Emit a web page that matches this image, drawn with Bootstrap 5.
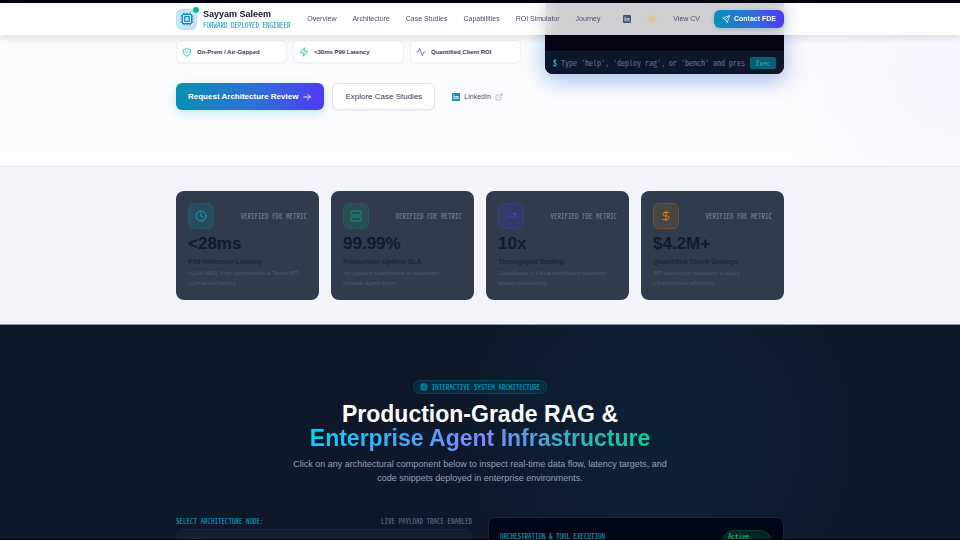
<!DOCTYPE html>
<html lang="en">
<head>
<meta charset="utf-8">
<meta name="viewport" content="width=device-width, initial-scale=1">
<title>Sayyam Saleem – Forward Deployed Engineer</title>
<link href="https://cdn.jsdelivr.net/npm/bootstrap@5.3.0/dist/css/bootstrap.min.css" rel="stylesheet">
<style>
:root { --cy: #0891b2; --cta: linear-gradient(90deg, #0891b2, #2f6fd8 55%, #4f39f6); }
body { font-family: "Liberation Sans", Arial, sans-serif; font-size: 7px; line-height: 10px; color: #0f172b; background: #f8fafc; }
.mono { font-family: "Noto Sans Mono CJK SC", "Noto Sans Mono CJK JP", "Liberation Mono", monospace; }
.frame { border-top: 3px solid #04040f; border-bottom: 1px solid #04040f; }
.wrap { width: 100%; max-width: 632px; padding: 0 12px; margin: 0 auto; }
svg { display: block; flex: none; fill: none; stroke: currentColor; stroke-width: 2; stroke-linecap: round; stroke-linejoin: round; }
.i8 { width: 8px; height: 8px; } .i10 { width: 10px; height: 10px; } .i12 { width: 12px; height: 12px; } .i14 { width: 14px; height: 14px; }
a { text-decoration: none; }
.topbar { background: rgba(255,255,255,.81); backdrop-filter: blur(8px); box-shadow: 0 2px 8px rgba(15,23,43,.14); z-index: 5; }
.topbar .wrap { height: 32px; }
.ident { gap: 6px; }
.logo { width: 21px; height: 21px; border-radius: 6px; background: linear-gradient(90deg, #c3e8f3, #d3dcfa); border: 1px solid #b5e2ef; color: var(--cy); }
.dot { width: 6px; height: 6px; background: #00bc7d; top: -3px; right: -3px; }
.brand { font-size: 9px; line-height: 12px; font-weight: 700; }
.role { font-size: 7px; line-height: 10px; color: #0e97bd; }
.links { gap: 16px; }
.links a, .cv { color: #45556c; }
.tools { gap: 14px; margin-left: 6px; }
.contact { background: var(--cta); color: #fff; border-radius: 6px; height: 18px; padding: 0 8px; gap: 4px; box-shadow: 0 1px 4px rgba(8,145,178,.3); }
.plain { border: 0; padding: 0 2px; background: none; color: #f9bd14; }
.hero { height: 164px; background: radial-gradient(circle at 950px 70px, #f6f5fe 0, #f8f9fe 90px, transparent 180px), linear-gradient(#f9fafc, #fcfdfe); border-bottom: 1px solid #e2e8f0; }
.intro { flex: 0 1 345px; padding-top: 37px; }
.feats { display: grid; grid-template-columns: repeat(3, minmax(0, 1fr)); gap: 6px; }
.feat { background: #fff; border: 1px solid #edf2f6; border-radius: 5px; height: 23px; padding: 0 5px; gap: 5px; font-size: 6px; font-weight: 700; color: #314158; box-shadow: 0 1px 1px rgba(15,23,43,.03); white-space: nowrap; }
.acts { margin-top: 20px; gap: 8px; }
.cta { height: 27px; padding: 0 12px; border-radius: 6px; font-size: 8px; gap: 4px; white-space: nowrap; }
.cta-main { background: var(--cta); color: #fff; font-weight: 700; box-shadow: 0 3px 8px rgba(6,182,212,.25); }
.cta-alt { background: #fff; color: #314158; border: 1px solid #dfe5ee; box-shadow: 0 1px 2px rgba(15,23,43,.06); }
.in-link { color: #45556c; margin-left: 9px; gap: 4px; }
.term { flex: 0 0 239px; height: 71px; background: #030511; border-radius: 0 0 8px 8px; box-shadow: -3px 6px 18px rgba(8,145,178,.24), 4px 8px 22px rgba(79,57,246,.2); }
.prompt { background: #0d162a; border-top: 1px solid #141d31; height: 23px; padding: 0 8px; gap: 4px; border-radius: 0 0 8px 8px; }
.prompt label { color: #00c6e8; font-size: 8px; font-weight: 700; }
.prompt input { border: 0; background: none; padding: 0; outline: 0; font-size: 8px; min-width: 0; }
.prompt input::placeholder { color: #62748e; opacity: 1; }
.exec { background: #066078; color: #4fa4b5; border: 0; border-radius: 2px; width: 26px; height: 12px; padding: 0; margin-left: 1px; font-size: 7px; line-height: 12px; }
.stats { background: #f1f5f9; padding: 24px 0; border-bottom: 1px solid #8b93a0; }
.four { display: grid; grid-template-columns: repeat(4, minmax(0, 1fr)); gap: 12px; }
.metric { background: #303b4d; border-radius: 8px; padding: 12px; height: 109px; }
.tile { width: 26px; height: 26px; border-radius: 6px; border: 1px solid; }
.t-c { color: #079fc4; background: #294c60; border-color: #1c5c70; }
.t-g { color: #06996f; background: #294d51; border-color: #1f5e58; }
.t-v { color: #4a3fd8; background: #343a66; border-color: #3b3c78; }
.t-o { color: #dd790a; background: #494543; border-color: #6b512f; }
.ver { font-size: 7px; color: #7c8798; }
.num { font-size: 17px; line-height: 20px; font-weight: 700; margin: 5px 0 3px; color: #111a2e; }
.cap { font-size: 7px; line-height: 10px; font-weight: 700; color: #1e293b; margin: 0; }
.desc { font-size: 6px; line-height: 10px; color: #4b586d; margin: 1px 0 0; }
.arch { background: radial-gradient(circle at 660px 110px, #0c2035 0, #0d1d31 110px, transparent 210px), #0f172a; padding-top: 55px; }
.pill { color: #00a6c8; background: #072b40; border: 1px solid #0a4156; border-radius: 7px; height: 14px; padding: 0 6px; gap: 4px; font-size: 7px; }
.title { font-size: 23px; line-height: 24px; font-weight: 700; color: #fff; margin: 8px 0 7px; }
.grad { background: linear-gradient(90deg, #00d3f2, #7c86ff 50%, #00d492); -webkit-background-clip: text; background-clip: text; color: transparent; }
.lede { font-size: 9px; line-height: 14px; color: #90a1b9; max-width: 384px; margin: 0 auto 32px; }
.two { display: grid; grid-template-columns: repeat(2, minmax(0, 1fr)); gap: 16px; }
.sel { font-size: 7px; line-height: 9px; color: #0ba6c8; }
.sel span + span { color: #62748e; }
.node { margin-top: 3px; height: 64px; border: 1px solid #1a2537; border-radius: 8px; background: #142032; padding: 8px; }
.node i { width: 22px; height: 22px; border-radius: 6px; background: #1e293b; }
.panel { height: 90px; background: #010617; border: 1px solid #1a2639; border-radius: 8px; padding: 12px 11px; }
.ptitle { color: #0ba6c8; font-size: 7px; line-height: 13px; }
.live { color: #00d492; background: #02251f; border: 1px solid #05402f; border-radius: 12px; width: 50px; height: 25px; padding: 0 5px; font-size: 7px; line-height: 11px; }
</style>
</head>
<body>
<div class="frame vh-100 overflow-hidden position-relative">
<header class="topbar position-absolute top-0 start-0 end-0">
  <div class="wrap d-flex align-items-center justify-content-between">
    <div class="ident d-flex align-items-center">
      <div class="logo d-flex align-items-center justify-content-center position-relative">
        <svg class="i14" viewBox="0 0 24 24"><rect x="4" y="4" width="16" height="16" rx="2"/><rect x="8" y="8" width="8" height="8" rx="1"/><path d="M12 20v2M12 2v2M17 20v2M17 2v2M2 12h2M2 17h2M2 7h2M20 12h2M20 17h2M20 7h2M7 20v2M7 2v2"/></svg>
        <span class="dot rounded-circle position-absolute"></span>
      </div>
      <div><div class="brand">Sayyam Saleem</div><div class="role mono">FORWARD DEPLOYED ENGINEER</div></div>
    </div>
    <nav class="links d-flex"><a href="#">Overview</a><a href="#arch">Architecture</a><a href="#">Case Studies</a><a href="#">Capabilities</a><a href="#">ROI Simulator</a><a href="#">Journey</a></nav>
    <div class="tools d-flex align-items-center">
      <a href="#" class="cv" aria-label="LinkedIn"><svg class="i8" viewBox="1 1 22 22"><path fill="currentColor" fill-rule="evenodd" stroke="none" d="M4 1h16a3 3 0 0 1 3 3v16a3 3 0 0 1-3 3H4a3 3 0 0 1-3-3V4a3 3 0 0 1 3-3zM5 9.500v9h3v-9zM6.500 4.800a1.800 1.800 0 1 0 0 3.600 1.800 1.800 0 0 0 0-3.600zM10.500 9.500v9h3v-5c0-2 2.500-2.200 2.500 0v5h3V13c0-4.500-4.200-4.500-5.500-2.200V9.500z"/></svg></a>
      <button class="plain" type="button" aria-label="Toggle theme"><svg class="i10" viewBox="0 0 24 24"><circle cx="12" cy="12" r="4"/><path d="M12 2v2M12 20v2M4.900 4.900l1.400 1.400M17.700 17.700l1.400 1.400M2 12h2M20 12h2M6.300 17.700l-1.400 1.400M19.100 4.900l-1.400 1.400"/></svg></button>
      <a href="#" class="cv">View CV</a>
      <a href="#" class="contact d-flex align-items-center fw-bold"><svg class="i8" viewBox="0 0 24 24"><path d="M22 2 2 9l8 5 5 8z"/><path d="M22 2 10 14"/></svg>Contact FDE</a>
    </div>
  </div>
</header>
<section class="hero">
  <div class="wrap d-flex justify-content-between">
    <div class="intro">
      <div class="feats">
        <div class="feat d-flex align-items-center"><svg class="i10" style="color:#16b3d3" viewBox="0 0 24 24"><path d="M20 13c0 5-3.500 7.500-8 9-4.500-1.500-8-4-8-9V6c3 0 5.500-1.500 8-4 2.500 2.500 5 4 8 4z"/><path d="m9 12 2 2 4-4"/></svg>On-Prem / Air-Gapped</div>
        <div class="feat d-flex align-items-center"><svg class="i10" style="color:#10c28a" viewBox="0 0 24 24"><path d="M4 14a1 1 0 0 1-.8-1.600l9.900-10.200a.5.5 0 0 1 .9.500l-2 6A1 1 0 0 0 13 10h7a1 1 0 0 1 .8 1.600l-9.900 10.200a.5.5 0 0 1-.9-.5l2-6a1 1 0 0 0-1-1.300z"/></svg>&lt;30ms P99 Latency</div>
        <div class="feat d-flex align-items-center"><svg class="i10" style="color:#665cf5" viewBox="0 0 24 24"><path d="M22 12h-3.500L15 21 9 3 5.500 12H2"/></svg>Quantified Client ROI</div>
      </div>
      <div class="acts d-flex align-items-center">
        <a href="#" class="cta cta-main d-flex align-items-center">Request Architecture Review<svg class="i10" viewBox="0 0 24 24"><path d="M4 12h16M13 5l7 7-7 7"/></svg></a>
        <a href="#" class="cta cta-alt d-flex align-items-center">Explore Case Studies</a>
        <a href="#" class="in-link d-flex align-items-center"><svg class="i8" style="color:#0891b2" viewBox="1 1 22 22"><path fill="currentColor" fill-rule="evenodd" stroke="none" d="M4 1h16a3 3 0 0 1 3 3v16a3 3 0 0 1-3 3H4a3 3 0 0 1-3-3V4a3 3 0 0 1 3-3zM5 9.500v9h3v-9zM6.500 4.800a1.800 1.800 0 1 0 0 3.600 1.800 1.800 0 0 0 0-3.600zM10.500 9.500v9h3v-5c0-2 2.500-2.200 2.500 0v5h3V13c0-4.500-4.200-4.500-5.500-2.200V9.500z"/></svg>LinkedIn<svg class="i8" style="color:#90a1b9" viewBox="0 0 24 24"><path d="M15 3h6v6M10 14 21 3M18 13v6a2 2 0 0 1-2 2H5a2 2 0 0 1-2-2V8a2 2 0 0 1 2-2h6"/></svg></a>
      </div>
    </div>
    <div class="term d-flex flex-column justify-content-end">
      <form class="prompt mono d-flex align-items-center"><label for="cmd">$</label><input class="mono flex-fill" id="cmd" type="text" placeholder="Type 'help', 'deploy rag', or 'bench' and press Enter"><button class="exec mono" type="button">Exec</button></form>
    </div>
  </div>
</section>
<section class="stats">
  <div class="wrap"><div class="four">
    <article class="metric"><div class="d-flex align-items-center justify-content-between"><div class="tile t-c d-flex align-items-center justify-content-center"><svg class="i12" viewBox="0 0 24 24"><circle cx="12" cy="12" r="10"/><path d="M12 6v6l4 2"/></svg></div><span class="ver mono">VERIFIED FDE METRIC</span></div><p class="num">&lt;28ms</p><p class="cap">P99 Inference Latency</p><p class="desc">vLLM AWQ 4-bit optimization &amp; TensorRT-LLM kernel tuning</p></article>
    <article class="metric"><div class="d-flex align-items-center justify-content-between"><div class="tile t-g d-flex align-items-center justify-content-center"><svg class="i12" viewBox="0 0 24 24"><rect x="2" y="2" width="20" height="8" rx="2"/><rect x="2" y="14" width="20" height="8" rx="2"/></svg></div><span class="ver mono">VERIFIED FDE METRIC</span></div><p class="num">99.99%</p><p class="cap">Production Uptime SLA</p><p class="desc">Air-gapped Kubernetes &amp; redundant<br>fallback agent loops</p></article>
    <article class="metric"><div class="d-flex align-items-center justify-content-between"><div class="tile t-v d-flex align-items-center justify-content-center"><svg class="i12" viewBox="0 0 24 24"><path d="m2 17 6.500-6.500 5 5L22 7M16 7h6v6"/></svg></div><span class="ver mono">VERIFIED FDE METRIC</span></div><p class="num">10x</p><p class="cap">Throughput Scaling</p><p class="desc">ClickHouse + Kafka distributed telemetry stream processing</p></article>
    <article class="metric"><div class="d-flex align-items-center justify-content-between"><div class="tile t-o d-flex align-items-center justify-content-center"><svg class="i12" viewBox="0 0 24 24"><path d="M12 2v20M17 5H9.500a3.500 3.500 0 0 0 0 7h5a3.500 3.500 0 0 1 0 7H6"/></svg></div><span class="ver mono">VERIFIED FDE METRIC</span></div><p class="num">$4.2M+</p><p class="cap">Quantified Client Savings</p><p class="desc">API token cost reduction &amp; cloud infrastructure efficiency.</p></article>
  </div></div>
</section>
<section class="arch" id="arch">
  <div class="wrap">
    <div class="text-center">
      <div class="pill mono d-inline-flex align-items-center"><svg class="i8" viewBox="0 0 24 24"><rect x="3" y="3" width="18" height="18" rx="3"/><rect x="8" y="8" width="8" height="8" rx="1"/><path d="M12 3v5M12 16v5M3 12h5M16 12h5M4 4l4 4M20 4l-4 4M4 20l4-4M20 20l-4-4"/></svg>INTERACTIVE SYSTEM ARCHITECTURE</div>
      <h2 class="title">Production-Grade RAG &amp;<br><span class="grad">Enterprise Agent Infrastructure</span></h2>
      <p class="lede">Click on any architectural component below to inspect real-time data flow, latency targets, and code snippets deployed in enterprise environments.</p>
    </div>
    <div class="two">
      <div><div class="sel mono d-flex justify-content-between"><span>SELECT ARCHITECTURE NODE:</span><span>LIVE PAYLOAD TRACE ENABLED</span></div><div class="node"><i class="d-block"></i></div></div>
      <div class="panel d-flex justify-content-between align-items-start"><span class="ptitle mono">ORCHESTRATION &amp; TOOL EXECUTION</span><span class="live mono">Active</span></div>
    </div>
  </div>
</section>
</div>
<script src="https://cdn.jsdelivr.net/npm/bootstrap@5.3.0/dist/js/bootstrap.bundle.min.js"></script>
</body>
</html>
